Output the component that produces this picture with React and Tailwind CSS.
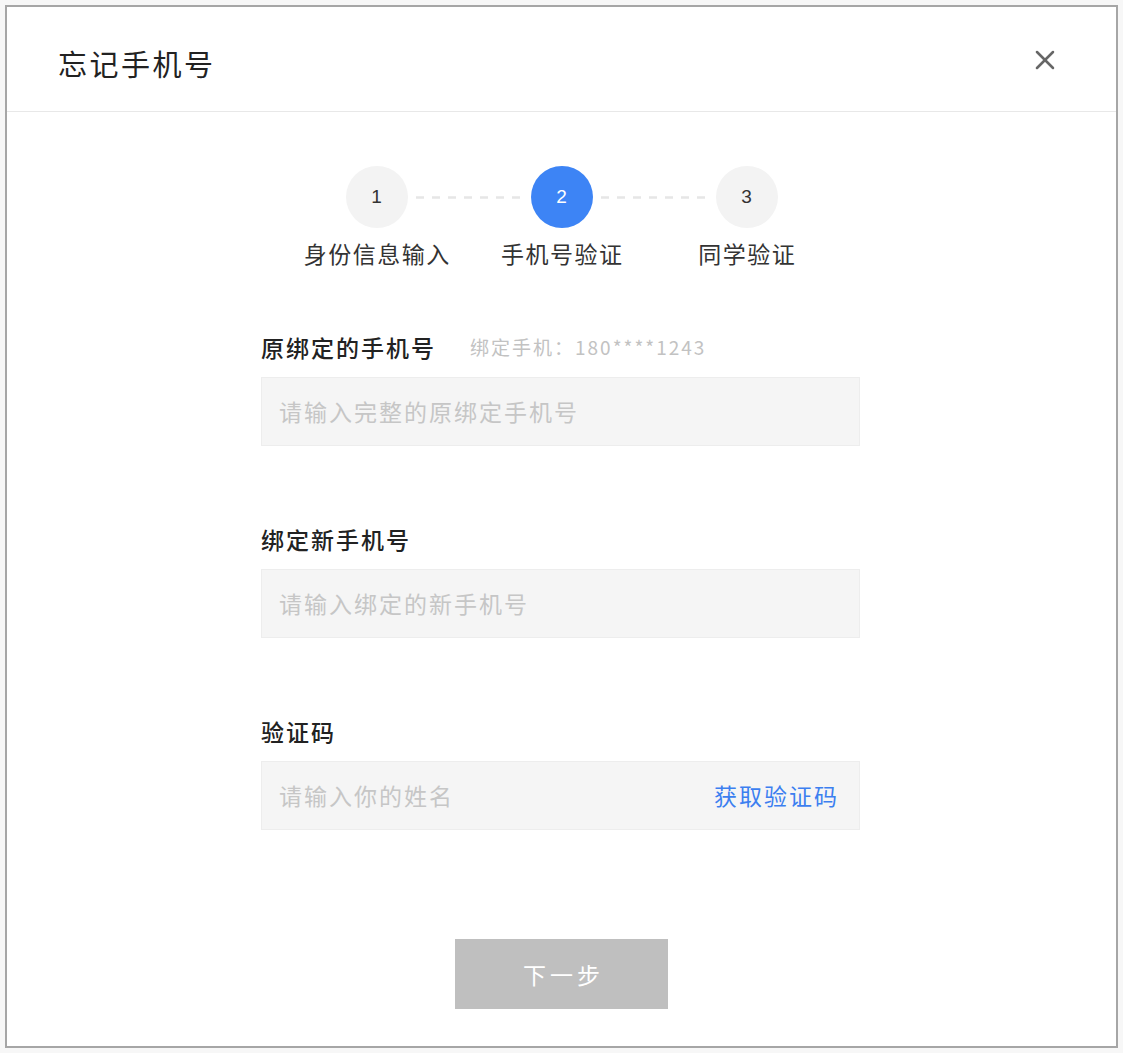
import { X } from 'lucide-react'

const font = { fontFamily: '"Noto Sans CJK SC", "Noto Sans", sans-serif' }

const steps = [
    { n: 1, label: '身份信息输入' },
    { n: 2, label: '手机号验证', active: true },
    { n: 3, label: '同学验证' },
]

const Field = ({ label, hint, placeholder, action }) => (
    <div className="flex flex-col">
        <div className="flex items-center h-[30px]">
            <span className="text-[23px] font-medium text-[#222] tracking-[2px]">{label}</span>
            {hint && <span className="ml-[34px] text-[19px] text-[#c2c2c2] tracking-[2px]">{hint}</span>}
        </div>
        <div className="mt-[15px] h-[69px] bg-[#f5f5f5] border border-[#ededed] flex items-center justify-between pl-[17px] pr-[20px]">
            <span className="text-[23px] text-[#c6c6c6] tracking-[2px]">{placeholder}</span>
            {action && <span className="text-[23px] text-[#3c7ff0] tracking-[2px]">{action}</span>}
        </div>
    </div>
)

export default function App() {
    return (
        <div className="w-[1123px] h-[1053px] bg-[#f7f7f7] p-[5px]" style={font}>
            <div className="w-[1113px] h-[1043px] bg-white border-2 border-[#a6a6a6] flex flex-col">
                {/* Header */}
                <div className="h-[105px] border-b border-[#e8e8e8] flex items-start justify-between pl-[51px] pr-[55px] shrink-0">
                    <h1 className="mt-[42px] text-[29px] leading-[29px] text-[#222] tracking-[2.5px]">忘记手机号</h1>
                    <X className="mt-[37px] w-[32px] h-[32px] text-[#666]" strokeWidth={1.9} />
                </div>

                {/* Steps */}
                <div className="flex justify-center pt-[54px]">
                    <div className="flex items-start">
                        {steps.map((s, i) => (
                            <div key={s.n} className="flex items-start">
                                <div className="flex flex-col items-center w-[62px] relative">
                                    <div
                                        className={`w-[62px] h-[62px] rounded-full flex items-center justify-center text-[19px] ${s.active ? 'bg-[#3d84f5] text-white' : 'bg-[#f3f3f3] text-[#333]'}`}
                                        style={{ fontFamily: '"Liberation Sans", sans-serif' }}
                                    >
                                        {s.n}
                                    </div>
                                    <span className="absolute top-[73px] whitespace-nowrap text-[23px] leading-[28px] text-[#333] tracking-[1.5px] pl-[1.5px]">{s.label}</span>
                                </div>
                                {i < steps.length - 1 && (
                                    <div className="w-[123px] h-[62px] flex items-center pl-[8px] pr-[6px]">
                                        <svg className="w-full h-[3px]" preserveAspectRatio="none">
                                            <line x1="0" y1="1.5" x2="100%" y2="1.5" stroke="#e6e6e6" strokeWidth="2.5" strokeDasharray="8 8" />
                                        </svg>
                                    </div>
                                )}
                            </div>
                        ))}
                    </div>
                </div>

                {/* Form */}
                <div className="w-[599px] self-center mt-[104px] ml-[-2px] flex flex-col gap-[78px]">
                    <Field label="原绑定的手机号" hint="绑定手机：180****1243" placeholder="请输入完整的原绑定手机号" />
                    <Field label="绑定新手机号" placeholder="请输入绑定的新手机号" />
                    <Field label="验证码" placeholder="请输入你的姓名" action="获取验证码" />
                </div>

                {/* Footer */}
                <div className="flex justify-center mt-auto pb-[37px]">
                    <button className="w-[213px] h-[70px] bg-[#bfbfbf] text-white text-[23px] tracking-[4px] pl-[4px]">下一步</button>
                </div>
            </div>
        </div>
    )
}
